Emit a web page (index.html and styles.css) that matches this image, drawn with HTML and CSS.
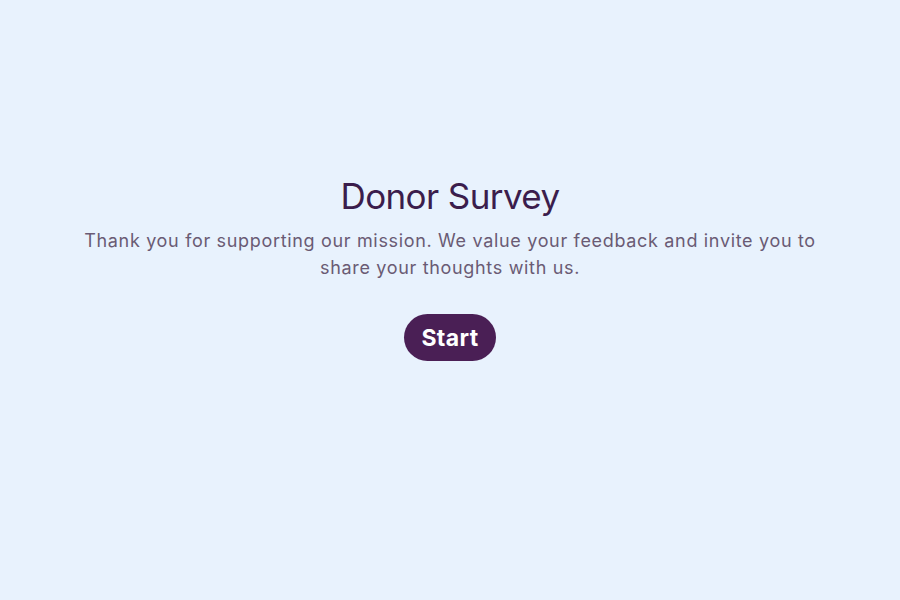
FILE: index.html
```html
<!DOCTYPE html>
<html>
<head>
<meta charset="utf-8">
<link rel="stylesheet" href="styles.css">
</head>
<body>
<main class="page">
  <section class="intro">
    <h1 class="title">Donor Survey</h1>
    <p class="lead">Thank you for supporting our mission. We value your feedback and invite you to share your thoughts with us.</p>
    <button class="start">Start</button>
  </section>
</main>
</body>
</html>
```
FILE: styles.css
```css
html, body {
  margin: 0;
  padding: 0;
  background: #e8f2fd;
}
.page {
  height: 600px;
  display: flex;
  justify-content: center;
  align-items: flex-start;
  padding-top: 174px;
  box-sizing: border-box;
  font-family: Inter, "Noto Sans", sans-serif;
}
.intro {
  width: 745px;
  display: flex;
  flex-direction: column;
  align-items: center;
  text-align: center;
}
.title {
  margin: 0;
  font-size: 35px;
  font-weight: 400;
  line-height: 44px;
  color: #3b1d4c;
  letter-spacing: -0.6px;
}
.lead {
  margin: 9px 0 0;
  font-size: 18px;
  line-height: 27px;
  color: #6a5b74;
  letter-spacing: 0.67px;
}
.start {
  margin-top: 33px;
  height: 47px;
  width: 92px;
  padding: 0;
  border: none;
  border-radius: 24px;
  background: #4a1f55;
  color: #fff;
  font-family: inherit;
  font-size: 23px;
  font-weight: 700;
  letter-spacing: 0.4px;
}
```
